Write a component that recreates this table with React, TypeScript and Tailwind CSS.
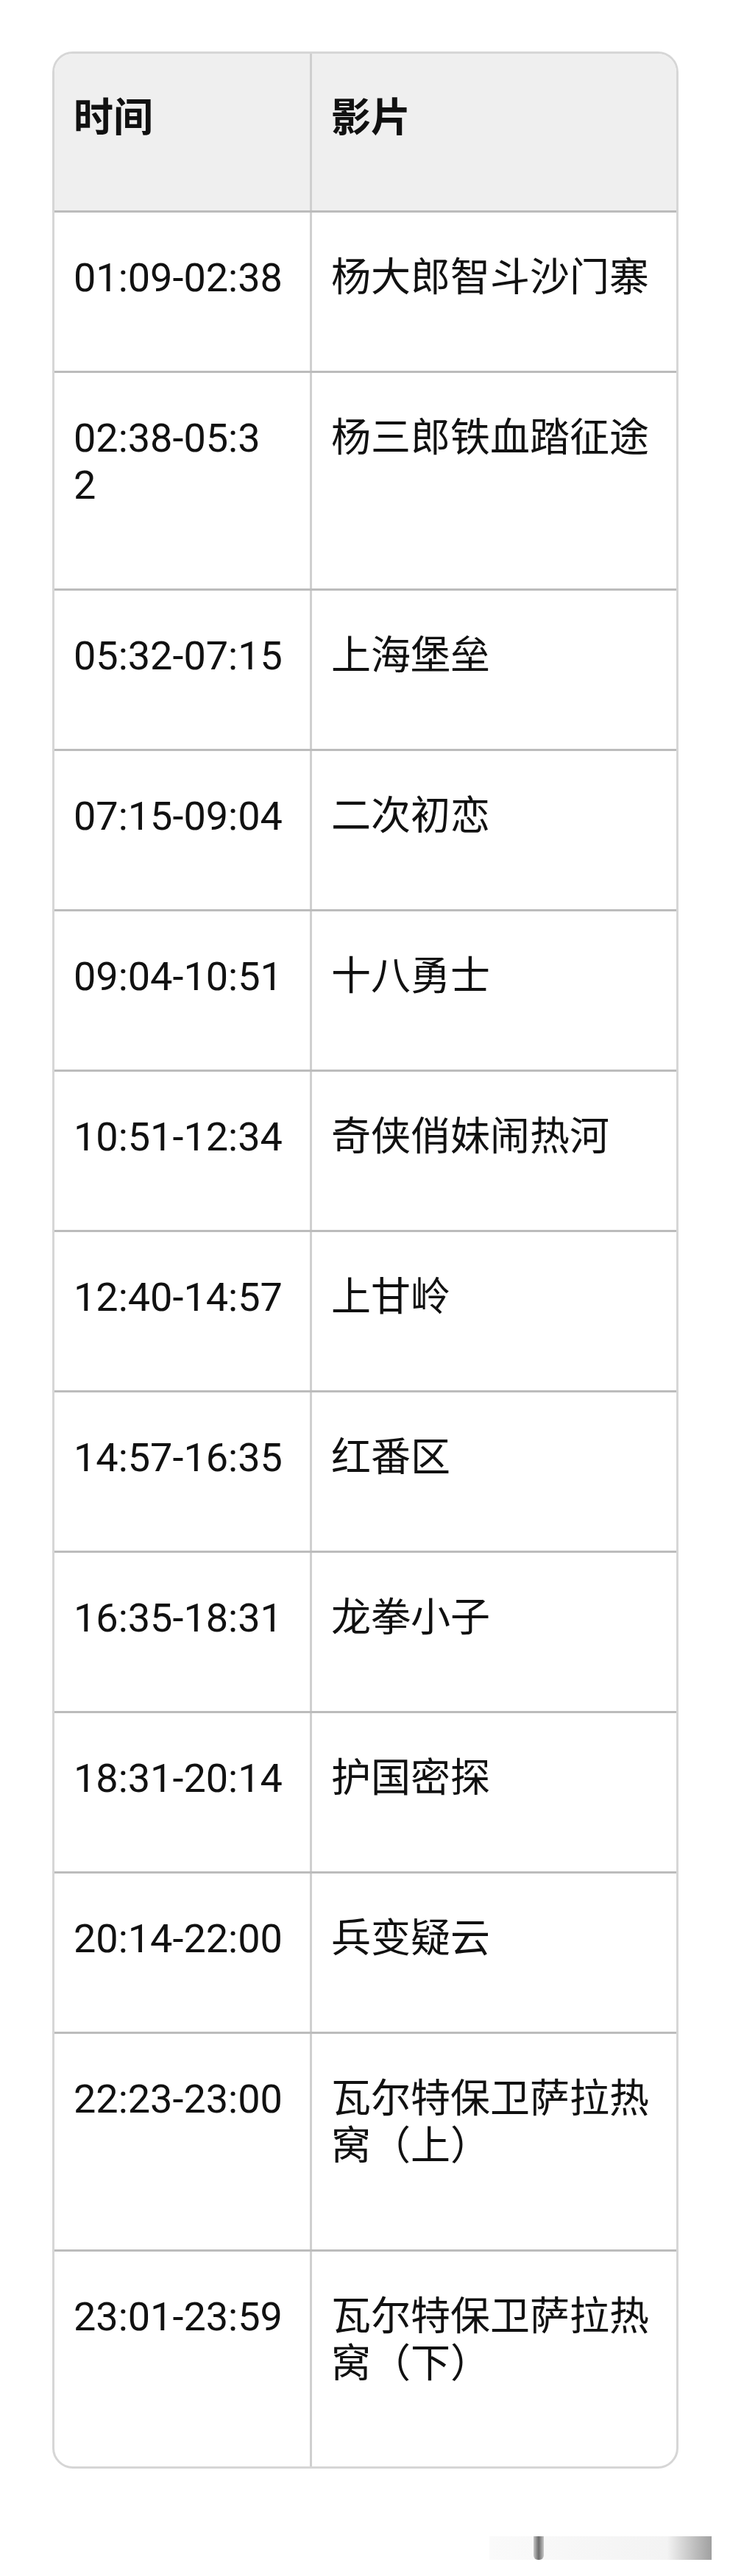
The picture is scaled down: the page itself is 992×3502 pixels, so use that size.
import React from "react";

type Row = { time: React.ReactNode; film: string; tall?: boolean };

const rows: Row[] = [
  { time: "01:09-02:38", film: "杨大郎智斗沙门寨" },
  {
    time: (
      <>
        02:38-05:3
        <br />2
      </>
    ),
    film: "杨三郎铁血踏征途",
    tall: true,
  },
  { time: "05:32-07:15", film: "上海堡垒" },
  { time: "07:15-09:04", film: "二次初恋" },
  { time: "09:04-10:51", film: "十八勇士" },
  { time: "10:51-12:34", film: "奇侠俏妹闹热河" },
  { time: "12:40-14:57", film: "上甘岭" },
  { time: "14:57-16:35", film: "红番区" },
  { time: "16:35-18:31", film: "龙拳小子" },
  { time: "18:31-20:14", film: "护国密探" },
  { time: "20:14-22:00", film: "兵变疑云" },
  { time: "22:23-23:00", film: "瓦尔特保卫萨拉热窝（上）", tall: true },
  { time: "23:01-23:59", film: "瓦尔特保卫萨拉热窝（下）", tall: true },
];

export default function App() {
  return (
    <div
      className="min-h-[3502px] w-[992px] bg-white pt-[70px] text-[#111]"
      style={{ fontFamily: 'Roboto, "Noto Sans CJK SC", sans-serif' }}
    >
      <div className="ml-[71px] w-[851px] overflow-hidden rounded-[28px] border-[3px] border-[#d6d6d6]">
        {/* header */}
        <div className="grid h-[216px] grid-cols-[350px_1fr] border-b-[3px] border-[#bcbcbc] bg-[#efefef]">
          <div className="border-r-[3px] border-[#cfcfcf] pl-[26px] pt-[56px] text-[54px] font-bold leading-[64px]">
            时间
          </div>
          <div className="pl-[26px] pt-[56px] text-[54px] font-bold leading-[64px]">影片</div>
        </div>

        {rows.map((r, i) => {
          const last = i === rows.length - 1;
          const h = last ? "h-[292px]" : r.tall ? "h-[296px]" : "h-[218px]";
          return (
            <div
              key={i}
              className={`grid grid-cols-[350px_1fr] ${h} ${last ? "" : "border-b-[3px] border-[#bcbcbc]"}`}
            >
              <div className="border-r-[3px] border-[#cfcfcf] pl-[26px] pt-[57px] text-[54px] leading-[64px] whitespace-nowrap">
                {r.time}
              </div>
              <div className="pl-[26px] pr-[20px] pt-[57px] text-[54px] leading-[64px]">{r.film}</div>
            </div>
          );
        })}
      </div>

      {/* faint bar at the bottom right */}
      <div className="mt-[92px] flex justify-end pr-[25px]">
        <div className="relative h-[32px] w-[302px] bg-gradient-to-r from-[#fafafa] via-[#f3f3f3] via-80% to-[#a0a0a0]">
          <div className="absolute left-[60px] top-0 h-[32px] w-[14px] rounded-b-md bg-gradient-to-r from-[#c8c8c8] via-[#6a6a6a] to-[#c8c8c8]" />
        </div>
      </div>
    </div>
  );
}
